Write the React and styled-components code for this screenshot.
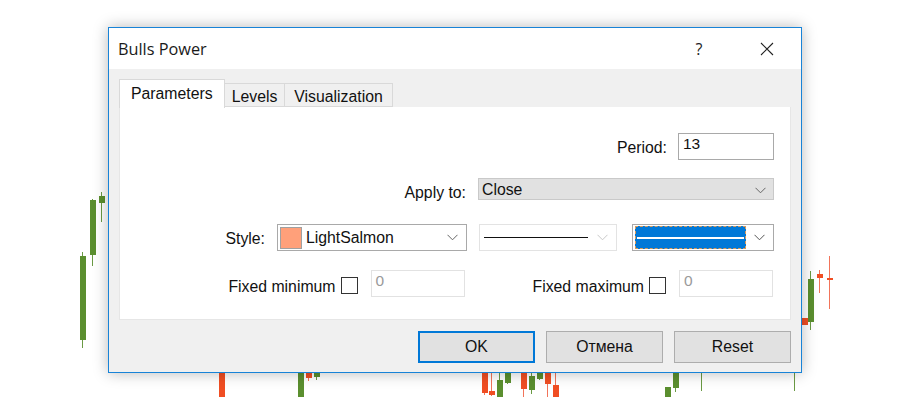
import React from 'react';
import styled, { createGlobalStyle } from 'styled-components';

const GlobalStyle = createGlobalStyle`
  html, body {
    margin: 0;
    padding: 0;
    background: #ffffff;
  }
  body {
    font-family: "Liberation Sans", Arial, sans-serif;
  }
`;

const Screen = styled.div`
  position: relative;
  width: 900px;
  height: 416px;
  overflow: hidden;
  background: #ffffff;
`;

const Chart = styled.div`
  position: absolute;
  inset: 0;
`;

const Wick = styled.div`
  position: absolute;
  width: 1px;
  background: ${({ $up }) => ($up ? '#6a9a44' : '#f2745a')};
`;

const Body = styled.div`
  position: absolute;
  width: 6px;
  background: ${({ $up }) => ($up ? '#5b8f2f' : '#f04e23')};
`;

// x, bodyTop, bodyBottom, wickTop, wickBottom, up
const candles = [
  [80, 256, 340, 252, 348, true],
  [90, 200, 255, 199, 266, true],
  [99, 196, 203, 192, 222, true],
  [808, 279, 322, 271, 330, true],
  [817, 274, 278, 270, 293, false],
  [827, 278, 280, 256, 309, false],
  [802, 318, 325, 318, 325, false],
  [792, 373, 373, 373, 391, true],
  [219, 373, 397, 373, 397, false],
  [298, 373, 397, 373, 397, true],
  [306, 373, 378, 373, 381, false],
  [314, 373, 377, 373, 380, true],
  [482, 373, 393, 373, 395, false],
  [489, 391, 395, 373, 396, false],
  [497, 380, 397, 373, 397, true],
  [505, 373, 383, 373, 384, true],
  [521, 373, 389, 373, 397, false],
  [529, 376, 390, 373, 394, true],
  [537, 373, 379, 373, 380, true],
  [545, 373, 384, 373, 397, false],
  [553, 385, 397, 373, 397, false],
  [665, 387, 397, 387, 397, true],
  [673, 373, 388, 373, 392, true],
  [699, 373, 373, 373, 391, true],
];

const Window = styled.div`
  position: absolute;
  left: 108px;
  top: 27px;
  width: 692px;
  height: 344px;
  border: 1px solid #1883d7;
  background: #f0f0f0;
  box-shadow: 0 0 14px rgba(0, 0, 0, 0.28);
  display: flex;
  flex-direction: column;
`;

const TitleBar = styled.div`
  height: 41px;
  background: #ffffff;
  display: flex;
  align-items: center;
  padding-left: 9px;
`;

const Title = styled.div`
  flex: 1;
  font-family: "Open Sans", "Noto Sans", sans-serif;
  font-size: 16.3px;
  color: #1a1a1a;
  padding-top: 1px;
`;

const TitleButton = styled.div`
  width: ${({ $w }) => $w}px;
  height: 41px;
  display: flex;
  align-items: center;
  justify-content: center;
  font-family: "Open Sans", "Noto Sans", sans-serif;
  font-size: 16px;
  color: #222;
`;

const Content = styled.div`
  flex: 1;
  display: flex;
  flex-direction: column;
  padding: 10px 10px 10px 10px;
`;

const TabStrip = styled.div`
  display: flex;
  align-items: flex-end;
  height: 28px;
  position: relative;
  z-index: 1;
`;

const Tab = styled.div`
  box-sizing: border-box;
  height: ${({ $active }) => ($active ? 29 : 24)}px;
  margin-bottom: ${({ $active }) => ($active ? -1 : 0)}px;
  padding: 0 ${({ $pad }) => $pad}px;
  background: ${({ $active }) => ($active ? '#ffffff' : '#f0f0f0')};
  border: 1px solid #d9d9d9;
  border-bottom: ${({ $active }) => ($active ? 'none' : '1px solid #d9d9d9')};
  border-left: ${({ $first, $active }) => ($first || $active ? '1px solid #d9d9d9' : 'none')};
  display: flex;
  align-items: center;
  padding-top: ${({ $active }) => ($active ? 0 : 3)}px;
  font-size: 15.8px;
  color: #111;
`;

const Panel = styled.div`
  height: 213px;
  background: #ffffff;
  border: 1px solid #e6e6e6;
  border-top: none;
  box-sizing: border-box;
  padding: 26px 16px 0 0;
  display: flex;
  flex-direction: column;
`;

const Row = styled.div`
  display: flex;
  justify-content: flex-end;
  align-items: center;
  margin-top: ${({ $mt }) => $mt || 0}px;
  height: ${({ $h }) => $h}px;
`;

const Label = styled.div`
  font-size: 15.8px;
  color: #111;
  margin-right: ${({ $mr }) => $mr}px;
  padding-top: ${({ $pt }) => $pt || 0}px;
`;

const TextInput = styled.div`
  box-sizing: border-box;
  width: ${({ $w }) => $w}px;
  height: 27px;
  border: 1px solid ${({ $disabled }) => ($disabled ? '#e2e2e2' : '#a9a9a9')};
  background: #fff;
  padding: 1px 0 0 4px;
  font-size: 15.5px;
  color: ${({ $disabled }) => ($disabled ? '#9a9a9a' : '#111')};
  line-height: 18px;
`;

const ComboGrey = styled.div`
  box-sizing: border-box;
  width: 296px;
  height: 22px;
  background: #e1e1e1;
  border: 1px solid #c9c9c9;
  display: flex;
  align-items: center;
  padding: 2px 0 0 3px;
  font-size: 15.8px;
  color: #111;
`;

const Combo = styled.div`
  box-sizing: border-box;
  width: ${({ $w }) => $w}px;
  height: 27px;
  background: #fff;
  border: 1px solid ${({ $light }) => ($light ? '#e3e3e3' : '#a9a9a9')};
  display: flex;
  align-items: center;
  padding: 2px;
  margin-left: ${({ $ml }) => $ml || 0}px;
`;

const ComboText = styled.div`
  flex: 1;
  font-size: 15.8px;
  color: #111;
  padding-left: 4px;
`;

const Swatch = styled.div`
  width: 20px;
  height: 20px;
  background: #ffa07a;
  border: 1px solid #a0a0a0;
`;

const LineSample = styled.div`
  flex: 1;
  height: 1px;
  background: #111;
  margin: 0 2px 0 2px;
`;

const WidthSample = styled.div`
  box-sizing: border-box;
  width: 113px;
  height: 23px;
  background: #0078d7;
  outline: 1px dashed #d89a5c;
  outline-offset: -1px;
  display: flex;
  align-items: center;
  padding: 0 2px;
  margin-right: 2px;
`;

const WidthLine = styled.div`
  flex: 1;
  height: 2px;
  background: #ffffff;
`;

const ChevronBox = styled.div`
  width: ${({ $w }) => $w || 24}px;
  display: flex;
  justify-content: center;
  align-items: center;
`;

const Check = styled.div`
  box-sizing: border-box;
  width: 17px;
  height: 17px;
  border: 1px solid #333;
  background: #fff;
  margin-right: ${({ $mr }) => $mr}px;
  margin-top: 4px;
`;

const Group = styled.div`
  display: flex;
  align-items: center;
  margin-left: ${({ $ml }) => $ml || 0}px;
`;

const ButtonRow = styled.div`
  display: flex;
  justify-content: flex-end;
  gap: 11px;
  margin-top: 11px;
`;

const Button = styled.div`
  box-sizing: border-box;
  width: 117px;
  height: 32px;
  background: #e1e1e1;
  border: ${({ $primary }) => ($primary ? '2px solid #0078d7' : '1px solid #adadad')};
  display: flex;
  align-items: center;
  justify-content: center;
  font-size: 15.8px;
  color: #111;
`;

const Chevron = ({ color = '#555' }) => (
  <svg width="11" height="7" viewBox="0 0 11 7">
    <path d="M0.5 0.8 L5.5 5.8 L10.5 0.8" fill="none" stroke={color} strokeWidth="1" />
  </svg>
);

const CloseIcon = () => (
  <svg width="14" height="14" viewBox="0 0 14 14">
    <path d="M1 1 L13 13 M13 1 L1 13" stroke="#222" strokeWidth="1.1" fill="none" />
  </svg>
);

export default function App() {
  return (
    <Screen>
      <GlobalStyle />
      <Chart>
        {candles.map(([x, bt, bb, wt, wb, up], i) => (
          <React.Fragment key={i}>
            <Wick $up={up} style={{ left: x + 2, top: wt, height: wb - wt }} />
            {bb > bt && <Body $up={up} style={{ left: x, top: bt, height: bb - bt }} />}
          </React.Fragment>
        ))}
      </Chart>

      <Window>
        <TitleBar>
          <Title>Bulls Power</Title>
          <TitleButton $w={36}>?</TitleButton>
          <TitleButton $w={34} style={{ marginLeft: 33, marginRight: 17 }}>
            <CloseIcon />
          </TitleButton>
        </TitleBar>

        <Content>
          <TabStrip>
            <Tab $active $first $pad={11}>Parameters</Tab>
            <Tab $pad={7}>Levels</Tab>
            <Tab $pad={9}>Visualization</Tab>
          </TabStrip>
          <Panel>
            <Row $h={27}>
              <Label $mr={11} $pt={2}>Period:</Label>
              <TextInput $w={96}>13</TextInput>
            </Row>
            <Row $h={22} $mt={18}>
              <Label $mr={12} $pt={8}>Apply to:</Label>
              <ComboGrey>
                <ComboText style={{ paddingLeft: 0 }}>Close</ComboText>
                <ChevronBox $w={26}><Chevron color="#666" /></ChevronBox>
              </ComboGrey>
            </Row>
            <Row $h={27} $mt={24}>
              <Label $mr={12} $pt={2}>Style:</Label>
              <Combo $w={190}>
                <Swatch />
                <ComboText>LightSalmon</ComboText>
                <ChevronBox><Chevron color="#666" /></ChevronBox>
              </Combo>
              <Combo $w={138} $ml={12} $light>
                <LineSample />
                <ChevronBox $w={24}><Chevron color="#c8c8c8" /></ChevronBox>
              </Combo>
              <Combo $w={142} $ml={15}>
                <WidthSample><WidthLine /></WidthSample>
                <ChevronBox $w={24}><Chevron color="#555" /></ChevronBox>
              </Combo>
            </Row>
            <Row $h={27} $mt={19} style={{ paddingRight: 1 }}>
              <Group>
                <Label $mr={5} $pt={6}>Fixed minimum</Label>
                <Check $mr={13} />
                <TextInput $w={94} $disabled>0</TextInput>
              </Group>
              <Group $ml={68}>
                <Label $mr={5} $pt={6}>Fixed maximum</Label>
                <Check $mr={13} />
                <TextInput $w={94} $disabled>0</TextInput>
              </Group>
            </Row>
          </Panel>
          <ButtonRow>
            <Button $primary>OK</Button>
            <Button>Отмена</Button>
            <Button>Reset</Button>
          </ButtonRow>
        </Content>
      </Window>
    </Screen>
  );
}
